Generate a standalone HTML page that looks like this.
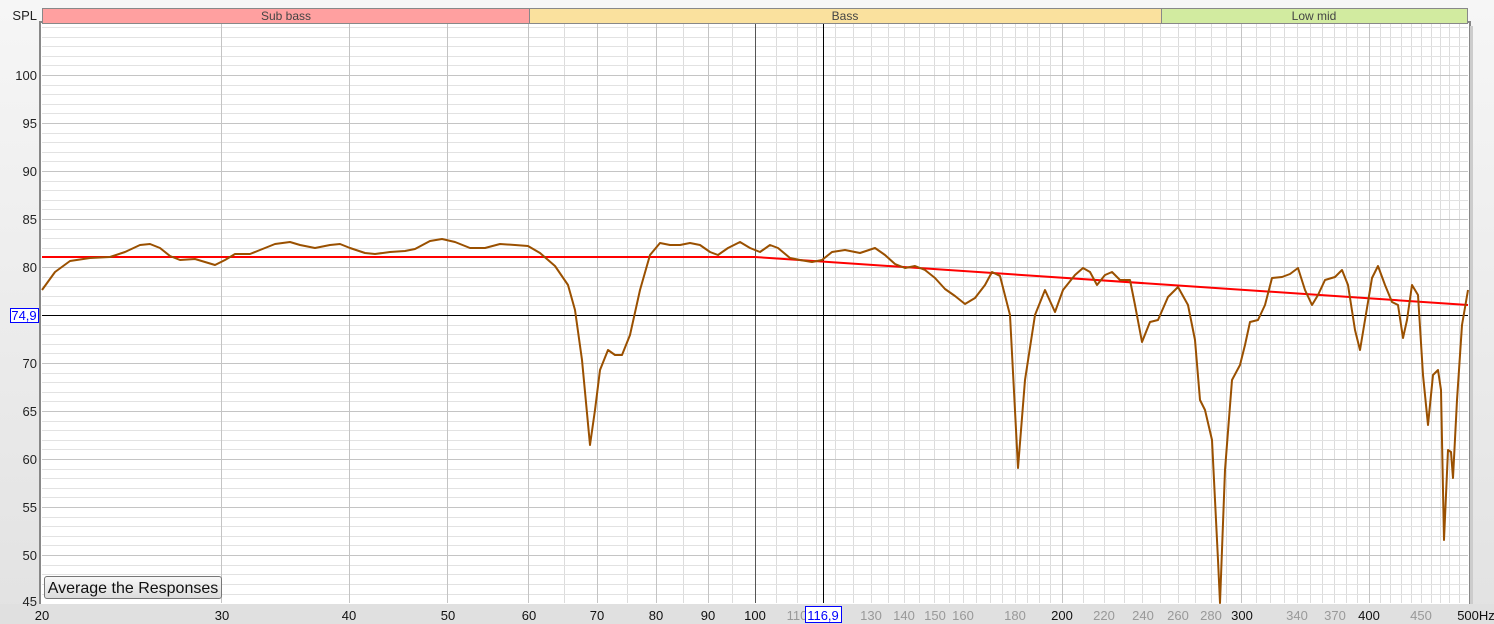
<!DOCTYPE html>
<html><head><meta charset="utf-8"><style>
body{margin:0;width:1494px;height:624px;overflow:hidden;background:linear-gradient(#f6f6f6,#e2e2e2);font-family:"Liberation Sans",sans-serif;}
svg{position:absolute;left:0;top:0}
.btn{position:absolute;left:44px;top:576px;width:178px;height:23px;border:1px solid #777;border-radius:3px;background:linear-gradient(#f8f8f8,#dcdcdc);font-size:16px;color:#111;line-height:23px;text-align:center;box-sizing:border-box}
</style></head><body>
<svg width="1494" height="624" font-family="Liberation Sans, sans-serif">
<rect x="40" y="22" width="1430" height="583" fill="#ffffff" stroke="#888" stroke-width="2"/>
<rect x="1470" y="26" width="3" height="580" fill="#ccc"/>
<g stroke="#dcdcdc">
<path d="M564.5 24V603M627.5 24V603M683.5 24V603M732.5 24V603M776.5 24V603M797.5 24V603M816.5 24V603M835.5 24V603M853.5 24V603M871.5 24V603M888.5 24V603M904.5 24V603M919.5 24V603M934.5 24V603M949.5 24V603M963.5 24V603M976.5 24V603M990.5 24V603M1002.5 24V603M1015.5 24V603M1027.5 24V603M1039.5 24V603M1050.5 24V603M1083.5 24V603M1104.5 24V603M1124.5 24V603M1142.5 24V603M1160.5 24V603M1178.5 24V603M1195.5 24V603M1211.5 24V603M1226.5 24V603M1256.5 24V603M1270.5 24V603M1284.5 24V603M1297.5 24V603M1310.5 24V603M1322.5 24V603M1334.5 24V603M1346.5 24V603M1357.5 24V603M1380.5 24V603M1390.5 24V603M1401.5 24V603M1411.5 24V603M1421.5 24V603M1431.5 24V603M1440.5 24V603M1449.5 24V603M1459.5 24V603"/>
</g>
<g stroke="#e2e2e2">
<path d="M42 594.5H1468M42 584.5H1468M42 574.5H1468M42 565.5H1468M42 545.5H1468M42 536.5H1468M42 526.5H1468M42 517.5H1468M42 497.5H1468M42 488.5H1468M42 478.5H1468M42 469.5H1468M42 449.5H1468M42 440.5H1468M42 430.5H1468M42 421.5H1468M42 401.5H1468M42 392.5H1468M42 382.5H1468M42 373.5H1468M42 353.5H1468M42 344.5H1468M42 334.5H1468M42 325.5H1468M42 305.5H1468M42 296.5H1468M42 286.5H1468M42 277.5H1468M42 257.5H1468M42 248.5H1468M42 238.5H1468M42 229.5H1468M42 209.5H1468M42 200.5H1468M42 190.5H1468M42 181.5H1468M42 161.5H1468M42 152.5H1468M42 142.5H1468M42 133.5H1468M42 113.5H1468M42 104.5H1468M42 94.5H1468M42 85.5H1468M42 65.5H1468M42 56.5H1468M42 46.5H1468M42 37.5H1468M42 27.5H1468"/>
</g>
<g stroke="#c4c4c4">
<path d="M42 555.5H1468M42 507.5H1468M42 459.5H1468M42 411.5H1468M42 363.5H1468M42 315.5H1468M42 267.5H1468M42 219.5H1468M42 171.5H1468M42 123.5H1468M42 75.5H1468"/>
<path d="M221.5 24V603M349.5 24V603M447.5 24V603M528.5 24V603M597.5 24V603M656.5 24V603M708.5 24V603M1062.5 24V603M1241.5 24V603M1369.5 24V603"/>
</g>
<path d="M755.5 24V603" stroke="#555"/>
<path d="M823.5 24V603M42 315.5H1468" stroke="#000"/>
<polyline fill="none" stroke="#ff0000" stroke-width="2" points="42,257 755,257 1468,305"/>
<polyline fill="none" stroke="#9a5000" stroke-width="2" stroke-linejoin="round" points="42,290 55,272 70,261 90,258 110,257 125,252 140,245 150,244 160,248 170,256 180,260 195,259 205,262 215,265 225,260 235,254 250,254 260,250 275,244 290,242 300,245 315,248 330,245 340,244 350,248 365,253 375,254 390,252 405,251 415,249 430,241 442,239 455,242 470,248 485,248 500,244 515,245 528,246 540,253 555,266 568,285 575,310 582,360 590,445 595,410 600,370 608,350 615,355 622,355 630,335 640,290 650,255 660,243 670,245 680,245 690,243 700,245 710,252 718,255 728,248 740,242 750,248 760,252 770,245 778,248 790,258 800,260 812,262 822,260 832,252 845,250 860,253 875,248 885,255 895,264 905,268 915,266 925,270 935,278 945,289 955,296 965,304 975,298 985,285 992,272 1000,276 1010,315 1018,468 1025,380 1035,315 1045,290 1055,312 1063,290 1075,275 1083,268 1090,272 1097,285 1105,275 1112,272 1120,280 1130,280 1135,305 1142,342 1150,322 1158,320 1168,297 1178,287 1188,305 1195,340 1200,400 1205,410 1212,440 1218,560 1220,603 1225,470 1232,380 1240,365 1245,345 1250,322 1258,320 1265,305 1272,278 1282,277 1290,274 1298,268 1305,290 1312,305 1318,295 1325,280 1335,277 1342,270 1348,285 1355,330 1360,350 1365,320 1372,278 1378,266 1385,285 1392,302 1398,305 1403,338 1407,320 1412,285 1418,295 1423,375 1428,425 1433,375 1438,370 1441,390 1444,540 1448,450 1451,452 1453,478 1457,400 1462,325 1468,290"/>
<rect x="0" y="604" width="1494" height="20" fill="#e0e0e0"/>
<rect x="42.5" y="8.5" width="487" height="15" fill="#ffa0a0" stroke="#888"/>
<rect x="529.5" y="8.5" width="632" height="15" fill="#fae19e" stroke="#888"/>
<rect x="1161.5" y="8.5" width="306" height="15" fill="#d2eba0" stroke="#888"/>
<g font-size="12" fill="#444" text-anchor="middle">
<text x="286" y="20">Sub bass</text><text x="845" y="20">Bass</text><text x="1314" y="20">Low mid</text>
</g>
<g font-size="13" fill="#222" text-anchor="end">
<text x="37" y="20">SPL</text>
<text x="37" y="80">100</text><text x="37" y="128">95</text><text x="37" y="176">90</text><text x="37" y="224">85</text><text x="37" y="272">80</text><text x="37" y="368">70</text><text x="37" y="416">65</text><text x="37" y="464">60</text><text x="37" y="512">55</text><text x="37" y="560">50</text><text x="37" y="606">45</text>
</g>
<rect x="10.5" y="308.5" width="28" height="14" fill="#fff" stroke="#0000ff"/>
<text x="24" y="320" font-size="13" fill="#0000ff" text-anchor="middle">74,9</text>
<g font-size="13" fill="#111" text-anchor="middle">
<text x="42" y="620">20</text><text x="222" y="620">30</text><text x="349" y="620">40</text><text x="448" y="620">50</text><text x="529" y="620">60</text><text x="597" y="620">70</text><text x="656" y="620">80</text><text x="708" y="620">90</text><text x="755" y="620">100</text><text x="1062" y="620">200</text><text x="1242" y="620">300</text><text x="1369" y="620">400</text><text x="1476" y="620">500Hz</text>
</g>
<g font-size="13" fill="#999" text-anchor="middle">
<text x="797" y="620">110</text><text x="871" y="620">130</text><text x="904" y="620">140</text><text x="935" y="620">150</text><text x="963" y="620">160</text><text x="1015" y="620">180</text><text x="1104" y="620">220</text><text x="1143" y="620">240</text><text x="1178" y="620">260</text><text x="1211" y="620">280</text><text x="1297" y="620">340</text><text x="1335" y="620">370</text><text x="1421" y="620">450</text>
</g>
<rect x="805.5" y="606.5" width="36" height="16" fill="#fff" stroke="#0000ff"/>
<text x="823" y="620" font-size="13" fill="#0000ff" text-anchor="middle">116,9</text>
</svg>
<div class="btn">Average the Responses</div>
</body></html>
